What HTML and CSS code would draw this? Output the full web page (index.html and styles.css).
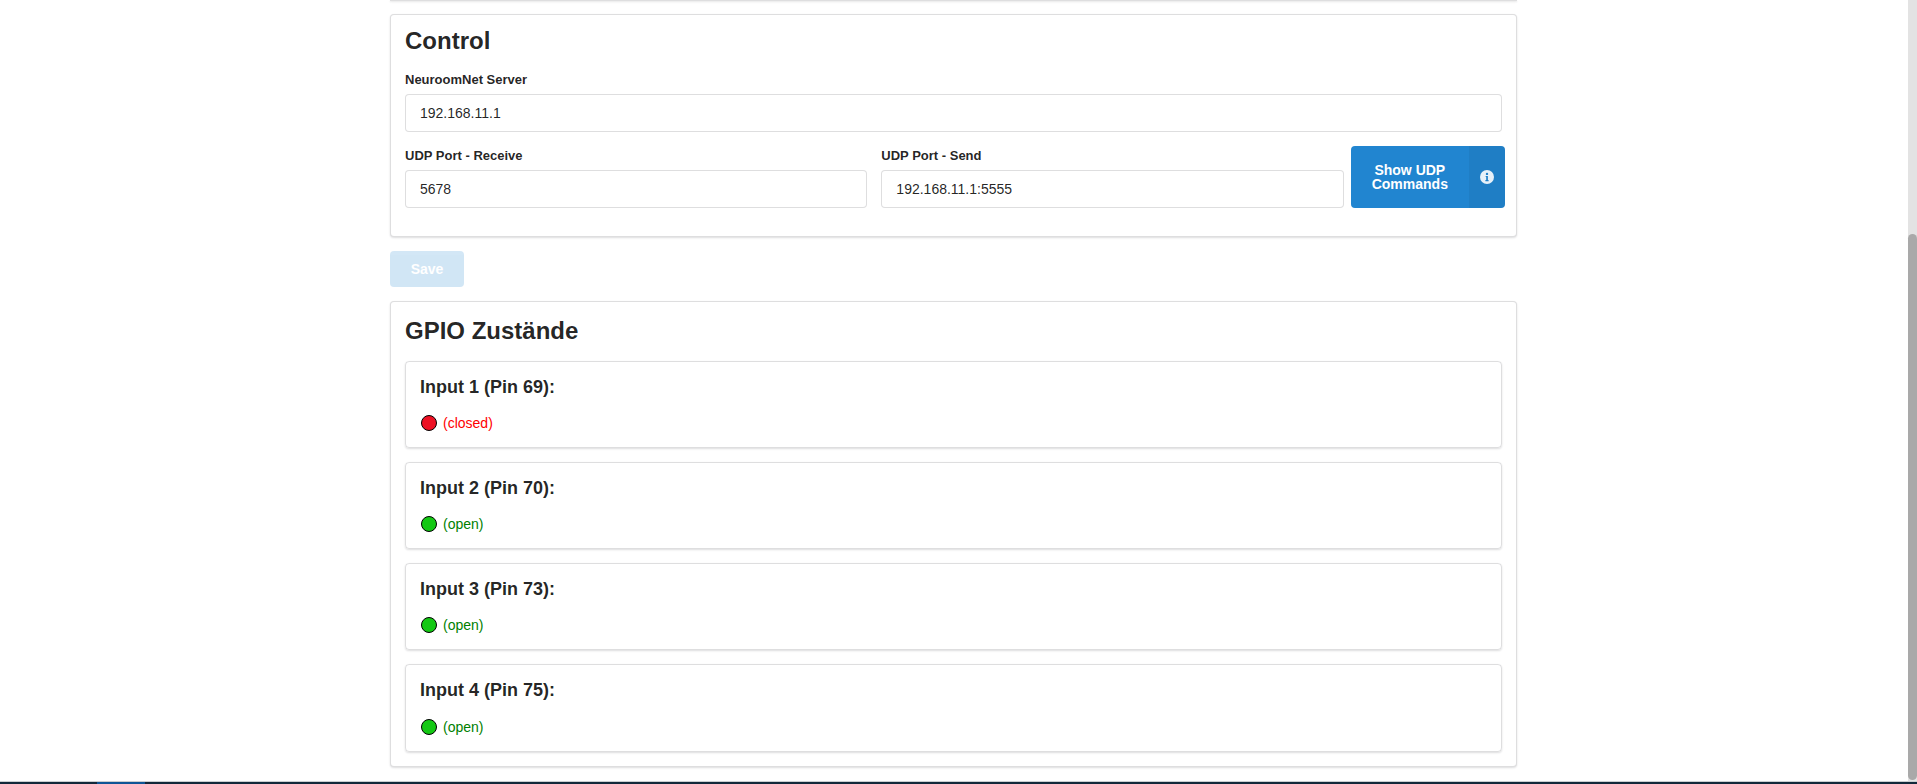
FILE: index.html
```html
<!DOCTYPE html>
<html lang="de">
<head>
  <meta charset="UTF-8">
  <meta name="viewport" content="width=device-width, initial-scale=1.0">
  <title>Settings</title>
  <link rel="stylesheet" href="styles.css">
</head>
<body>
  <div class="window">
    <main class="page">
      <div class="prev-segment"></div>

      <section class="segment">
        <h2 class="title">Control</h2>
        <div class="field">
          <label class="field-label" for="server">NeuroomNet Server</label>
          <input class="text-input" id="server" type="text" value="192.168.11.1">
        </div>
        <div class="fields">
          <div class="field col">
            <label class="field-label" for="port-in">UDP Port - Receive</label>
            <input class="text-input" id="port-in" type="text" value="5678">
          </div>
          <div class="field col">
            <label class="field-label" for="port-out">UDP Port - Send</label>
            <input class="text-input" id="port-out" type="text" value="192.168.11.1:5555">
          </div>
          <button class="udp-button" type="button">
            <span class="udp-text">Show UDP Commands</span>
            <span class="udp-icon">
              <svg viewBox="0 0 14 14" width="14" height="14" aria-hidden="true">
                <circle cx="7" cy="7" r="7" fill="#e6f0f9"/>
                <circle cx="7" cy="3.9" r="1.2" fill="#1f7fc8"/>
                <path d="M5.7 6h2.2v4.1h.7v1.1H5.4v-1.1h.8V7.1h-.5z" fill="#1f7fc8"/>
              </svg>
            </span>
          </button>
        </div>
      </section>

      <button class="save-button" type="button" disabled>Save</button>

      <section class="segment gpio">
        <h2 class="title">GPIO Zustände</h2>

        <div class="gpio-card">
          <h3 class="gpio-name">Input 1 (Pin 69):</h3>
          <div class="gpio-state closed"><span class="dot"></span>(closed)</div>
        </div>
        <div class="gpio-card">
          <h3 class="gpio-name">Input 2 (Pin 70):</h3>
          <div class="gpio-state open"><span class="dot"></span>(open)</div>
        </div>
        <div class="gpio-card">
          <h3 class="gpio-name">Input 3 (Pin 73):</h3>
          <div class="gpio-state open"><span class="dot"></span>(open)</div>
        </div>
        <div class="gpio-card">
          <h3 class="gpio-name">Input 4 (Pin 75):</h3>
          <div class="gpio-state open"><span class="dot"></span>(open)</div>
        </div>
      </section>
    </main>

    <div class="scrollbar"><div class="scrollbar-thumb"></div></div>
  </div>

  <div class="taskbar"><div class="taskbar-active"></div></div>
</body>
</html>
```

FILE: styles.css
```css
* {
  box-sizing: border-box;
}

body {
  margin: 0;
  height: 784px;
  overflow: hidden;
  background: #fff;
  color: rgba(0, 0, 0, 0.87);
  font-family: "Liberation Sans", Arial, sans-serif;
  font-size: 14px;
  line-height: 20px;
}

.window {
  display: flex;
  height: 781px;
}

.page {
  flex: 1;
  padding-left: 390px;
  padding-right: 391px;
  overflow: hidden;
}

/* bottom edge of the card scrolled out above */
.prev-segment {
  height: 1px;
  border-bottom: 1px solid rgba(34, 36, 38, 0.15);
  box-shadow: 0 1px 2px 0 rgba(34, 36, 38, 0.15);
  margin-bottom: 13px;
}

.segment {
  background: #fff;
  border: 1px solid rgba(34, 36, 38, 0.15);
  border-radius: 4px;
  box-shadow: 0 1px 2px 0 rgba(34, 36, 38, 0.15);
  padding: 14px;
}

.title {
  font-size: 24px;
  font-weight: 700;
  line-height: 31px;
  margin: -4px 0 14px;
}

.gpio {
  margin-top: 14px;
}

.gpio .title {
  margin: -1px 0 15px;
}

.field {
  margin-bottom: 14px;
}

.field-label {
  display: block;
  font-size: 13px;
  font-weight: 700;
  margin-bottom: 4px;
}

.text-input {
  display: block;
  width: 100%;
  height: 38px;
  padding: 9px 14px;
  border: 1px solid rgba(34, 36, 38, 0.15);
  border-radius: 4px;
  background: #fff;
  color: rgba(0, 0, 0, 0.87);
  font-family: inherit;
  font-size: 14px;
  outline: none;
}

.fields {
  display: flex;
  align-items: flex-start;
  margin: 0 -7px;
}

.col {
  flex: 1;
  padding: 0 7px;
}

.udp-button {
  display: flex;
  align-items: stretch;
  flex: none;
  width: 154px;
  height: 62px;
  margin-right: 4.33px;
  padding: 0;
  border: 0;
  border-radius: 4px;
  background: #2185d0;
  color: #fff;
  font-family: inherit;
  font-size: 14px;
  font-weight: 700;
  line-height: 14px;
  cursor: pointer;
}

.udp-text {
  flex: 1;
  align-self: center;
  padding: 0 21px;
  text-align: center;
}

.udp-icon {
  display: flex;
  align-items: center;
  justify-content: center;
  width: 36px;
  background: rgba(0, 0, 0, 0.05);
  border-radius: 0 4px 4px 0;
}

.save-button {
  display: block;
  height: 36px;
  margin-top: 14px;
  padding: 0 20.65px;
  border: 0;
  border-radius: 4px;
  background: #2185d0;
  color: #fff;
  font-family: inherit;
  font-size: 14px;
  font-weight: 700;
  opacity: 0.2;
}

.gpio-card {
  height: 87.15px;
  margin-bottom: 14px;
  padding: 14px;
  border: 1px solid rgba(34, 36, 38, 0.15);
  border-radius: 4px;
  box-shadow: 0 1px 2px 0 rgba(34, 36, 38, 0.15);
}

.gpio-card:last-child {
  margin-bottom: 0;
}

.gpio-name {
  font-size: 18px;
  font-weight: 700;
  line-height: 23px;
  margin: 0 0 14.1px;
}

.gpio-state {
  display: flex;
  align-items: center;
}

.dot {
  width: 16px;
  height: 16px;
  margin: 0 6px 0 1px;
  border: 1px solid #000;
  border-radius: 50%;
}

.closed {
  color: red;
}

.closed .dot {
  background: #ed1124;
}

.open {
  color: green;
}

.open .dot {
  background: #14c814;
}

.scrollbar {
  flex: none;
  width: 9px;
  padding-top: 234px;
  background: #e3e3e3;
}

.scrollbar-thumb {
  height: 546px;
  background: #a9a9a9;
  border-radius: 5px;
}

.taskbar {
  height: 3px;
  padding-left: 97px;
  border-top: 1px solid #c9cdd0;
  background: #12283a;
}

.taskbar-active {
  width: 48px;
  height: 2px;
  background: #0f5596;
}
```
